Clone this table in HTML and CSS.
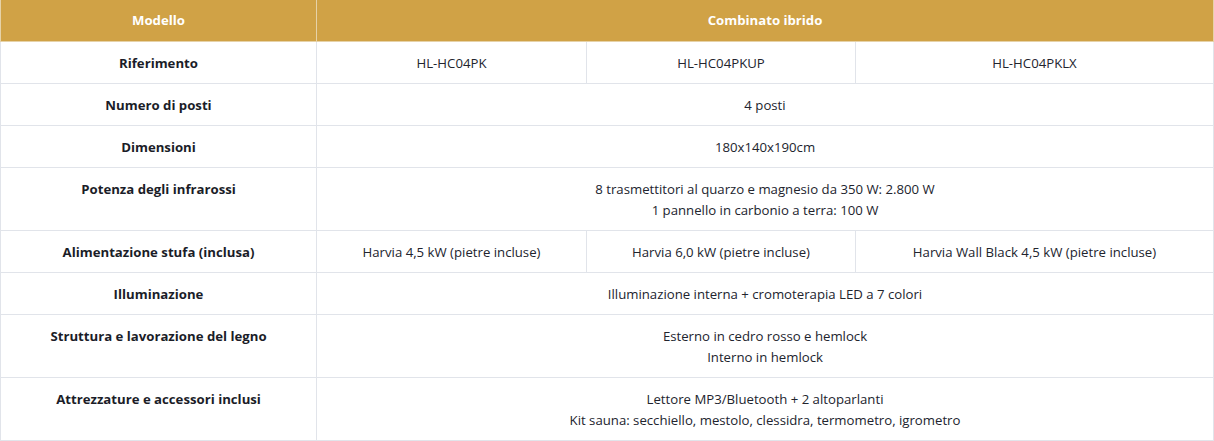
FILE: index.html
```html
<!DOCTYPE html>
<html lang="it">
<head>
<meta charset="utf-8">
<link rel="stylesheet" href="styles.css">
</head>
<body>
<table class="spec">
  <colgroup>
    <col class="c-label">
    <col class="c-a">
    <col class="c-b">
    <col class="c-c">
  </colgroup>
  <thead>
    <tr>
      <th>Modello</th>
      <th colspan="3">Combinato ibrido</th>
    </tr>
  </thead>
  <tbody>
    <tr>
      <td class="label">Riferimento</td>
      <td>HL-HC04PK</td>
      <td>HL-HC04PKUP</td>
      <td>HL-HC04PKLX</td>
    </tr>
    <tr>
      <td class="label">Numero di posti</td>
      <td colspan="3">4 posti</td>
    </tr>
    <tr>
      <td class="label">Dimensioni</td>
      <td colspan="3">180x140x190cm</td>
    </tr>
    <tr>
      <td class="label">Potenza degli infrarossi</td>
      <td colspan="3">8 trasmettitori al quarzo e magnesio da 350 W: 2.800 W<br>1 pannello in carbonio a terra: 100 W</td>
    </tr>
    <tr>
      <td class="label">Alimentazione stufa (inclusa)</td>
      <td>Harvia 4,5 kW (pietre incluse)</td>
      <td>Harvia 6,0 kW (pietre incluse)</td>
      <td>Harvia Wall Black 4,5 kW (pietre incluse)</td>
    </tr>
    <tr>
      <td class="label">Illuminazione</td>
      <td colspan="3">Illuminazione interna + cromoterapia LED a 7 colori</td>
    </tr>
    <tr>
      <td class="label">Struttura e lavorazione del legno</td>
      <td colspan="3">Esterno in cedro rosso e hemlock<br>Interno in hemlock</td>
    </tr>
    <tr>
      <td class="label">Attrezzature e accessori inclusi</td>
      <td colspan="3">Lettore MP3/Bluetooth + 2 altoparlanti<br>Kit sauna: secchiello, mestolo, clessidra, termometro, igrometro</td>
    </tr>
  </tbody>
</table>
</body>
</html>
```

FILE: styles.css
```css
html, body {
  margin: 0;
  padding: 0;
  background: #ffffff;
}

body {
  font-family: "Open Sans", "Noto Sans", sans-serif;
  font-size: 13.2px;
  color: #22242e;
}

.spec {
  width: 1213px;
  border-collapse: collapse;
  table-layout: fixed;
}

.c-label { width: 316px; }
.c-a { width: 270px; }
.c-b { width: 269px; }
.c-c { width: 358px; }

.spec th,
.spec td {
  border: 1px solid #e1e4ea;
  padding: 11px 8px 9px;
  line-height: 21px;
  text-align: center;
  vertical-align: top;
}

.spec th {
  background: #d0a246;
  color: #ffffff;
  font-weight: 700;
  padding: 10px 8px 10px;
  border-color: #e6d2a8;
  border-top: none;
}

.spec td.label {
  font-weight: 700;
  color: #1b1d28;
}
```
